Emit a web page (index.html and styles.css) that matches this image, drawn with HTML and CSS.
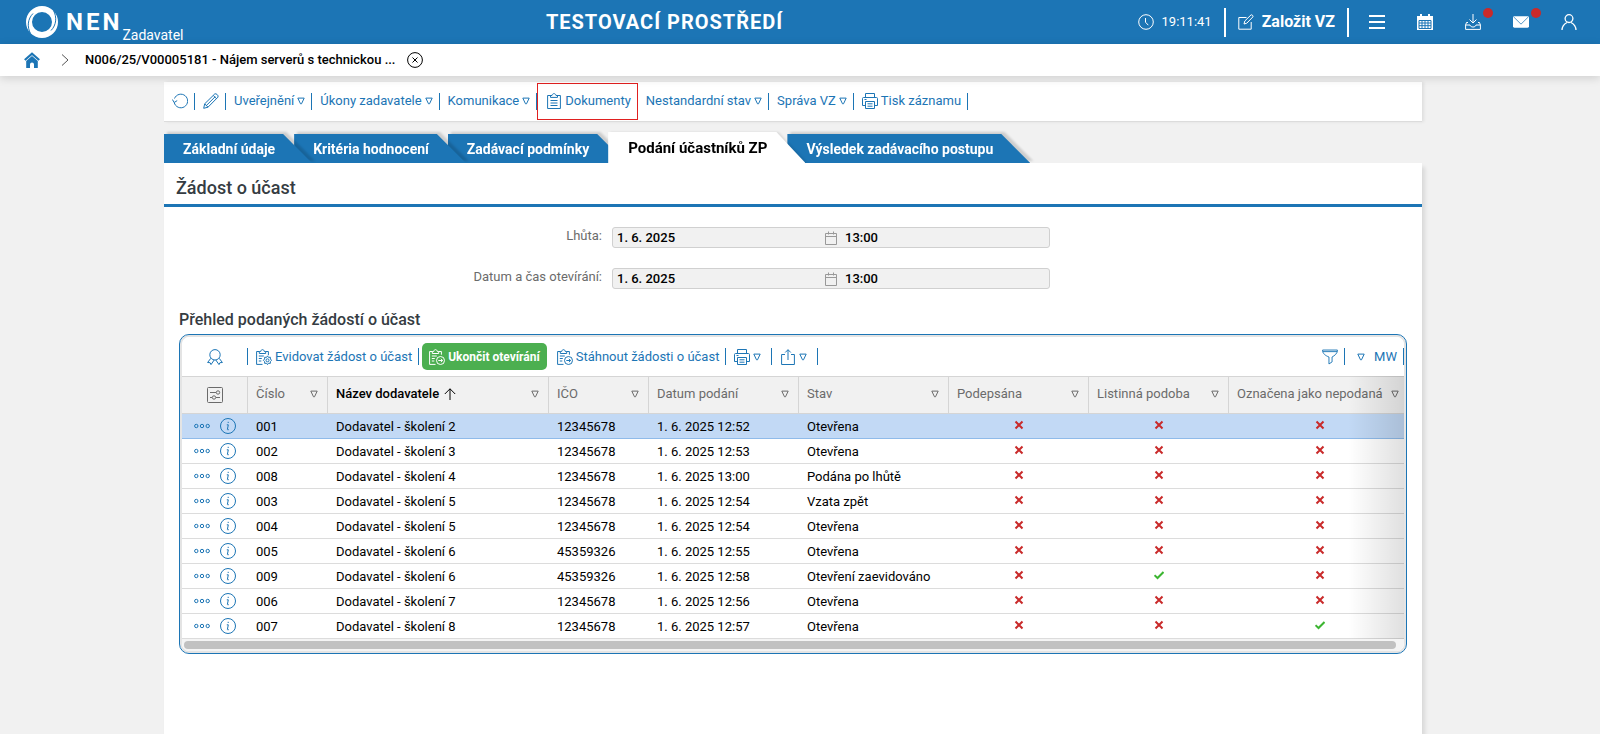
FILE: index.html
```html
<!DOCTYPE html>
<html lang="cs">

<head>
    <meta charset="utf-8">
    <title>NEN - Podání účastníků ZP</title>
    <link rel="stylesheet" href="styles.css">
</head>

<body>
    <!-- icon sprite -->
    <svg class="sprite" aria-hidden="true">
        <symbol id="i-clock" viewBox="0 0 16 16"><circle cx="8" cy="8" r="7.3"/><path d="M7.5 4v4.2l2.8 3"/></symbol>
        <symbol id="i-edit" viewBox="0 0 16 16"><path d="M8.5 3.5H.8v11.7h12.4V8"/><path d="M6 10l.8-3L13 .9c.8-.6 2.600 1 1.900 2L8.800 9.200z"/></symbol>
        <symbol id="i-menu" viewBox="0 0 16 16"><path stroke-width="2" d="M0 2h16M0 8h16M0 14h16"/></symbol>
        <symbol id="i-calendar" viewBox="0 0 16 16"><path class="solid" d="M0 2h3V0h2v2h6V0h2v2h3v14H0z"/><path stroke="#1c75b5" d="M2 6.500h12v8H2zM5 6.500v8M8 6.500v8M11 6.500v8M2 9h12M2 11.700h12"/></symbol>
        <symbol id="i-download" viewBox="0 0 16 16"><path d="M8 0v8.500M4.500 5.500L8 9l3.500-3.500M3 8.500H1.500L.6 11v4.400h14.800V11l-.9-2.500H13M.6 11H5c.5 2.700 5.500 2.700 6 0h4.400"/></symbol>
        <symbol id="i-mail" viewBox="0 0 17 16"><rect class="solid" y="2" width="17" height="12" rx="1.500"/><path stroke="#1c75b5" stroke-width=".8" d="M.8 2.700l7.700 7.600 7.700-7.600"/></symbol>
        <symbol id="i-user" viewBox="0 0 16 16"><g stroke-width="1.300"><circle cx="8" cy="4.600" r="3.900"/><path d="M1 16c.2-4.500 2.500-6.200 5-7.500M15 16c-.2-4.500-2.500-6.200-5-7.500"/></g></symbol>
        <symbol id="i-home" viewBox="0 0 16 16"><path stroke-width="2.200" d="M.8 8L8 1.600 15.200 8"/><path class="solid" d="M2.200 9L8 4l5.800 5v7H10v-3.500a2 2 0 0 0-4 0V16H2.200z"/></symbol>
        <symbol id="i-next" viewBox="0 0 8 12"><path d="M1 .5L7 6l-6 5.500"/></symbol>
        <symbol id="i-close" viewBox="0 0 16 16"><circle cx="8" cy="8" r="7.400"/><path d="M5.500 5.500l5 5M10.500 5.500l-5 5"/></symbol>
        <symbol id="i-refresh" viewBox="0 0 16 16"><path d="M2.200 9.500A6.800 6.800 0 1 0 2.500 5.500M.4 6.500l1.800 3 3-1.900"/></symbol>
        <symbol id="i-pencil" viewBox="0 0 16 16"><path d="M.7 15.300l1-4.500L11.800.9c1.200-.9 4.100 1.700 3.200 3.200L5 14.200zM1.700 10.800L5 14.200M3.200 12.700l9-9M10.300 2.400l3.300 3.400"/></symbol>
        <symbol id="i-drop" viewBox="0 0 8 8"><path d="M.8 1.100h6.400L4.500 6.800h-1z"/></symbol>
        <symbol id="i-doc" viewBox="0 0 14 16"><path d="M4 2.500H.6v13h12.800v-13H10M3.500 4.400h7V2.500H9C8.600 0 5.400 0 5 2.500H3.500zM3.500 7.500h7M3.500 10h7M3.500 12.500h7"/></symbol>
        <symbol id="i-print" viewBox="0 0 16 16"><path d="M3.500 4.500v-4h9v4M3.500 12.500h-3V5.500c0-.6.4-1 1-1h13c.6 0 1 .4 1 1v7h-3M3.500 8.500h9v7h-9zM5.500 10.800h5M5.500 13.200h5M2.500 6.500h2"/></symbol>
        <symbol id="i-badge" viewBox="0 0 16 16"><circle cx="8" cy="5.800" r="5.200"/><path d="M3.800 9.300L.6 13.500l2.500.2.900 1.900 3.200-4.600M12.200 9.300l3.200 4.200-2.500.2-.9 1.900L8.800 11"/></symbol>
        <symbol id="i-docset" viewBox="0 0 16 16"><path d="M6.500 15.400H.6V2.500h2.700M9.700 2.500h2.700v3.700M3.300 4.500h6.400v-2H8.300C8 0 5 0 4.700 2.500H3.300zM2.800 7h5M2.800 9.500h3M2.800 12h2.500"/><path d="M11.500 6.900l1 1.500 1.800-.2.100 1.800 1.200 1.300-1.200 1.300-.1 1.800-1.800-.2-1 1.400-1-1.400-1.800.2-.1-1.800-1.200-1.300L8.600 10l.1-1.800 1.800.2z"/><circle cx="11.500" cy="11.300" r="1.500"/></symbol>
        <symbol id="i-docgo" viewBox="0 0 16 16"><path d="M6.500 15.400H.6V2.500h2.700M9.700 2.500h2.700v3.200M3.300 4.500h6.400v-2H8.300C8 0 5 0 4.700 2.500H3.300zM2.800 7h5M2.800 9.500h3M2.800 12h2.500"/><circle cx="11.500" cy="11.500" r="4"/><path d="M9.300 11.500h4.200M11.900 9.800l1.700 1.700-1.700 1.700"/></symbol>
        <symbol id="i-share" viewBox="0 0 14 16"><path d="M4 5.500H.6v10h12.800v-10H10M7 11V.8M4.200 3.500L7 .7l2.800 2.800"/></symbol>
        <symbol id="i-filter" viewBox="0 0 17 16"><path d="M.6.6h15.800c0 4-3.200 6-5.700 7.400v5.200l-3.300 2.200V8C3.800 6.600.6 4.600.6.600zM.8 2.300h15.400"/></symbol>
        <symbol id="i-columns" viewBox="0 0 16 16"><rect x=".5" y=".5" width="15" height="15" rx="1"/><path d="M3 5.500h6M3 10.500h2M9 10.500h4"/><circle cx="11" cy="5.500" r="1.700"/><circle cx="7" cy="10.500" r="1.700"/></symbol>
        <symbol id="i-sort" viewBox="0 0 12 12"><path d="M6 12V.8M.8 6L6 .8 11.200 6"/></symbol>
        <symbol id="i-more" viewBox="0 0 16 6"><circle cx="2.300" cy="3" r="1.700"/><circle cx="8" cy="3" r="1.700"/><circle cx="13.700" cy="3" r="1.700"/></symbol>
        <symbol id="i-info" viewBox="0 0 16 16"><circle cx="8" cy="8" r="7.500"/><path d="M6.800 6.800h1.500l-.9 4.500c0 .7.800.6 1.500.2M8.200 3.800v1.200"/></symbol>
        <symbol id="i-date" viewBox="0 0 12 14"><path d="M.5 2.500h11v11H.5zM.5 5.500h11M3.500.5v3M8.500.5v3"/></symbol>
        <symbol id="i-no" viewBox="0 0 10 10"><path stroke-width="2" d="M1.500 1.500l7 7M8.500 1.500l-7 7"/></symbol>
        <symbol id="i-yes" viewBox="0 0 10 10"><path stroke-width="2" d="M.5 5.200l3 2.800 6-6"/></symbol>
    </svg>

    <header class="header">
        <a class="logo" href="#">
            <svg class="logo-mark" viewBox="0 0 32 32" aria-hidden="true">
                <circle cx="16" cy="16" r="13" stroke-width="6"/>
                <path class="slit" d="M27.500 4.500C31 11 30.500 19 25 24.500M4.500 27.500C1 21 1.500 13 7 7.500"/>
            </svg>
            <b>NEN</b>
            <span class="role">Zadavatel</span>
        </a>
        <h1 class="env">TESTOVACÍ PROSTŘEDÍ</h1>
        <nav class="header-nav">
            <span class="time"><svg class="icon"><use href="#i-clock"/></svg>19:11:41</span>
            <a class="create" href="#"><svg class="icon"><use href="#i-edit"/></svg>Založit VZ</a>
            <button class="nav-btn" aria-label="Menu"><svg class="icon"><use href="#i-menu"/></svg></button>
            <button class="nav-btn" aria-label="Kalendář"><svg class="icon"><use href="#i-calendar"/></svg></button>
            <button class="nav-btn dot" aria-label="Stažené soubory"><svg class="icon"><use href="#i-download"/></svg></button>
            <button class="nav-btn dot" aria-label="Zprávy"><svg class="icon"><use href="#i-mail"/></svg></button>
            <button class="nav-btn" aria-label="Uživatel"><svg class="icon"><use href="#i-user"/></svg></button>
        </nav>
    </header>

    <nav class="crumbs">
        <a class="home" href="#" aria-label="Domů"><svg class="icon"><use href="#i-home"/></svg></a>
        <svg class="next"><use href="#i-next"/></svg>
        <b>N006/25/V00005181 - Nájem serverů s technickou ...</b>
        <button class="close" aria-label="Zavřít"><svg class="icon"><use href="#i-close"/></svg></button>
    </nav>

    <main class="page">
        <div class="toolbar">
            <button class="tool" aria-label="Obnovit"><svg class="icon"><use href="#i-refresh"/></svg></button>
            <button class="tool" aria-label="Upravit"><svg class="icon"><use href="#i-pencil"/></svg></button>
            <button class="tool">Uveřejnění<svg class="drop"><use href="#i-drop"/></svg></button>
            <button class="tool">Úkony zadavatele<svg class="drop"><use href="#i-drop"/></svg></button>
            <button class="tool">Komunikace<svg class="drop"><use href="#i-drop"/></svg></button>
            <button class="tool marked"><svg class="icon"><use href="#i-doc"/></svg>Dokumenty</button>
            <button class="tool">Nestandardní stav<svg class="drop"><use href="#i-drop"/></svg></button>
            <button class="tool">Správa VZ<svg class="drop"><use href="#i-drop"/></svg></button>
            <button class="tool"><svg class="icon"><use href="#i-print"/></svg>Tisk záznamu</button>
        </div>

        <nav class="tabs">
            <div class="tab"><a href="#">Základní údaje</a></div>
            <div class="tab"><a href="#">Kritéria hodnocení</a></div>
            <div class="tab"><a href="#">Zadávací podmínky</a></div>
            <div class="tab active"><a href="#">Podání účastníků ZP</a></div>
            <div class="tab"><a href="#">Výsledek zadávacího postupu</a></div>
        </nav>

        <section class="content">
            <h2>Žádost o účast</h2>

            <div class="form">
                <label for="deadline">Lhůta:</label>
                <div class="field">
                    <input id="deadline" type="text" value="1. 6. 2025" readonly>
                    <svg class="date"><use href="#i-date"/></svg>
                    <input class="hour" type="text" value="13:00" aria-label="Lhůta - čas" readonly>
                </div>
                <label for="opening">Datum a čas otevírání:</label>
                <div class="field">
                    <input id="opening" type="text" value="1. 6. 2025" readonly>
                    <svg class="date"><use href="#i-date"/></svg>
                    <input class="hour" type="text" value="13:00" aria-label="Otevírání - čas" readonly>
                </div>
            </div>

            <h3>Přehled podaných žádostí o účast</h3>
            <div class="grid">
                <div class="grid-bar">
                    <button class="tool first" aria-label="Ocenění"><svg class="icon"><use href="#i-badge"/></svg></button>
                    <button class="tool"><svg class="icon"><use href="#i-docset"/></svg>Evidovat žádost o účast</button>
                    <button class="green"><svg class="icon"><use href="#i-docgo"/></svg>Ukončit otevírání</button>
                    <button class="tool"><svg class="icon"><use href="#i-docgo"/></svg>Stáhnout žádosti o účast</button>
                    <button class="tool pair" aria-label="Tisk"><svg class="icon"><use href="#i-print"/></svg><svg class="drop"><use href="#i-drop"/></svg></button>
                    <button class="tool pair" aria-label="Export"><svg class="icon"><use href="#i-share"/></svg><svg class="drop"><use href="#i-drop"/></svg></button>
                    <button class="tool filter" aria-label="Filtr"><svg class="icon"><use href="#i-filter"/></svg></button>
                    <button class="tool view"><svg class="drop"><use href="#i-drop"/></svg>MW</button>
                </div>
                <div class="grid-scroll">
                    <table>
                        <colgroup>
                            <col class="w-actions"><col class="w-no"><col class="w-name"><col class="w-ico"><col class="w-date">
                            <col class="w-date"><col class="w-flag"><col class="w-flag"><col class="w-last">
                        </colgroup>
                        <thead>
                            <tr>
                                <th class="cols"><svg class="icon"><use href="#i-columns"/></svg></th>
                                <th><div>Číslo<svg class="drop"><use href="#i-drop"/></svg></div></th>
                                <th class="sorted"><div>Název dodavatele<svg class="sort"><use href="#i-sort"/></svg><svg class="drop"><use href="#i-drop"/></svg></div></th>
                                <th><div>IČO<svg class="drop"><use href="#i-drop"/></svg></div></th>
                                <th><div>Datum podání<svg class="drop"><use href="#i-drop"/></svg></div></th>
                                <th><div>Stav<svg class="drop"><use href="#i-drop"/></svg></div></th>
                                <th><div>Podepsána<svg class="drop"><use href="#i-drop"/></svg></div></th>
                                <th><div>Listinná podoba<svg class="drop"><use href="#i-drop"/></svg></div></th>
                                <th><div>Označena jako nepodaná<svg class="drop"><use href="#i-drop"/></svg></div></th>
                            </tr>
                        </thead>
                        <tbody id="rows"></tbody>
                    </table>
                </div>
                <div class="scrollbar"><div class="thumb"></div></div>
            </div>
        </section>
    </main>

    <script>
        // číslo, dodavatel, IČO, datum, stav, podepsána, listinná, nepodaná
        var data = [
            ['001', 'Dodavatel - školení 2', '12345678', '1. 6. 2025 12:52', 'Otevřena', 0, 0, 0],
            ['002', 'Dodavatel - školení 3', '12345678', '1. 6. 2025 12:53', 'Otevřena', 0, 0, 0],
            ['008', 'Dodavatel - školení 4', '12345678', '1. 6. 2025 13:00', 'Podána po lhůtě', 0, 0, 0],
            ['003', 'Dodavatel - školení 5', '12345678', '1. 6. 2025 12:54', 'Vzata zpět', 0, 0, 0],
            ['004', 'Dodavatel - školení 5', '12345678', '1. 6. 2025 12:54', 'Otevřena', 0, 0, 0],
            ['005', 'Dodavatel - školení 6', '45359326', '1. 6. 2025 12:55', 'Otevřena', 0, 0, 0],
            ['009', 'Dodavatel - školení 6', '45359326', '1. 6. 2025 12:58', 'Otevření zaevidováno', 0, 1, 0],
            ['006', 'Dodavatel - školení 7', '12345678', '1. 6. 2025 12:56', 'Otevřena', 0, 0, 0],
            ['007', 'Dodavatel - školení 8', '12345678', '1. 6. 2025 12:57', 'Otevřena', 0, 0, 1]
        ];
        var html = '';
        for (var i = 0; i < data.length; i++) {
            html += i == 0 ? '<tr class="selected">' : '<tr>';
            html += '<td class="actions"><div><button aria-label="Akce"><svg class="more"><use href="#i-more"/></svg></button>' +
                '<button aria-label="Detail"><svg class="icon"><use href="#i-info"/></svg></button></div></td>';
            for (var j = 0; j < data[i].length; j++) {
                if (j < 5) {
                    html += '<td>' + data[i][j] + '</td>';
                } else {
                    var flag = data[i][j] ? 'yes' : 'no';
                    html += '<td class="flag"><svg class="' + flag + '"><use href="#i-' + flag + '"/></svg></td>';
                }
            }
            html += '</tr>';
        }
        document.getElementById('rows').innerHTML = html;
    </script>
</body>

</html>
```
FILE: styles.css
```css
* {
    box-sizing: border-box;
}

body {
    margin: 0;
    min-height: 100vh;
    display: flex;
    flex-direction: column;
    background: #f1f1f1;
    color: #000;
    font: 13px/16px Roboto, "Noto Sans", sans-serif;
}

h1,
h2,
h3 {
    margin: 0;
}

a {
    color: inherit;
    text-decoration: none;
}

button {
    padding: 0;
    border: 0;
    background: none;
    color: inherit;
    font: inherit;
    cursor: pointer;
}

svg {
    display: block;
    flex: none;
    fill: none;
    stroke: currentColor;
}

.solid {
    fill: currentColor;
    stroke: none;
}

.sprite {
    position: absolute;
    width: 0;
    height: 0;
}

.icon {
    width: 16px;
    height: 16px;
}

.drop {
    width: 8px;
    height: 8px;
}

/* header */
.header {
    display: flex;
    align-items: center;
    justify-content: space-between;
    height: 44px;
    padding: 0 7px 0 26px;
    background: #1c75b5;
    color: #fff;
}

.logo {
    display: flex;
    align-items: center;
    height: 44px;
}

.logo b {
    margin-left: 8px;
    font-size: 24px;
    letter-spacing: 3px;
}

.logo-mark {
    width: 32px;
    height: 32px;
}

.slit {
    stroke: #1c75b5;
    stroke-width: 1;
}

.role {
    align-self: flex-end;
    padding-bottom: 1px;
    font-size: 14px;
}

.env {
    padding-left: 8px;
    font-size: 20px;
    letter-spacing: 1px;
}

.header-nav {
    display: flex;
    align-items: center;
}

.time,
.create {
    display: flex;
    align-items: center;
    gap: 8px;
    height: 29px;
    padding-right: 12px;
    border-right: 2px solid #fff;
}

.create {
    margin-right: 4px;
    padding-left: 12px;
    font-size: 16px;
    font-weight: 700;
}

.nav-btn {
    position: relative;
    display: flex;
    justify-content: center;
    width: 48px;
}

.dot::after {
    content: "";
    position: absolute;
    top: -6px;
    right: 4px;
    width: 10px;
    height: 10px;
    border-radius: 50%;
    background: #c92a2a;
}

/* breadcrumbs */
.crumbs {
    position: relative;
    display: flex;
    align-items: center;
    height: 32px;
    padding-left: 24px;
    background: #fff;
    box-shadow: 0 2px 10px rgba(0, 0, 0, .15);
}

.crumbs b {
    font-weight: 500;
}

.home {
    color: #1c75b5;
}

.next {
    width: 8px;
    height: 12px;
    margin: 0 16px 0 21px;
    color: #555;
}

.close {
    margin-left: 12px;
}

/* page */
.page {
    flex: 1;
    display: flex;
    flex-direction: column;
    margin: 6px 178px 0 164px;
}

.toolbar {
    display: flex;
    height: 40px;
    align-items: center;
    padding-bottom: 1px;
    background: #fff;
    border-bottom: 1px solid #dcdcdc;
    box-shadow: 2px 0 3px rgba(0, 0, 0, .08);
}

.tool {
    display: flex;
    align-items: center;
    gap: 3px;
    height: 17px;
    padding: 0 6px 0 8px;
    border-right: 1px solid #1c75b5;
    color: #1c75b5;
    white-space: nowrap;
}

.marked {
    height: 37px;
    border: 1px solid #e02020;
}

.tabs {
    display: flex;
    align-items: flex-end;
    height: 41px;
}

.tab {
    position: relative;
    margin-left: -18px;
    filter: drop-shadow(3px -2px 1px rgba(0, 0, 0, .15));
}

.tab:nth-child(1) {
    z-index: 4;
    margin-left: 0;
}

.tab:nth-child(2) {
    z-index: 3;
}

.tab:nth-child(3) {
    z-index: 2;
}

.tab a {
    display: block;
    height: 29px;
    padding: 0 37px 0 19px;
    background: #1c75b5;
    clip-path: polygon(0 0, calc(100% - 29px) 0, 100% 100%, 0 100%);
    color: #fff;
    font-size: 14px;
    font-weight: 700;
    line-height: 30px;
    white-space: nowrap;
}

.tab.active {
    z-index: 5;
    filter: drop-shadow(2px 0 1px rgba(0, 0, 0, .1));
}

.tab.active a {
    height: 31px;
    padding: 0 38px 0 20px;
    background: #fff;
    color: #000;
    font-size: 15px;
    line-height: 32px;
}

.content {
    position: relative;
    z-index: 6;
    flex: 1;
    background: #fff;
    box-shadow: 3px 4px 4px rgba(0, 0, 0, .1);
}

.content h2 {
    height: 44px;
    padding-left: 12px;
    border-bottom: 3px solid #1c75b5;
    color: #353c42;
    font-size: 18px;
    font-weight: 500;
    line-height: 50px;
}

.form {
    display: grid;
    grid-template-columns: 438px 438px;
    gap: 20px 10px;
    padding: 20px 0 0;
}

.form label {
    color: #6b6b6b;
    line-height: 18px;
    text-align: right;
}

.field {
    display: flex;
    align-items: center;
    height: 21px;
    padding-left: 4px;
    border: 1px solid #d0d0d0;
    border-radius: 3px;
    background: #f1f1f1;
}

.field input {
    flex: none;
    width: 208px;
    padding: 0;
    border: 0;
    outline: 0;
    background: none;
    font: 500 13px/16px Roboto, "Noto Sans", sans-serif;
}

.field .hour {
    flex: 1;
    min-width: 0;
}

.field .date {
    width: 12px;
    height: 14px;
    margin-right: 8px;
    color: #999;
}

.content h3 {
    padding: 23px 15px 6px;
    color: #353c42;
    font-size: 16px;
    font-weight: 500;
    line-height: 16px;
}

/* grid */
.grid {
    margin: 0 15px;
    padding: 2px;
    border: 1px solid #1c75b5;
    border-radius: 10px;
    box-shadow: inset 0 0 0 2px #e4e4e4;
    overflow: hidden;
}

.grid-bar {
    display: flex;
    align-items: center;
    height: 39px;
    border-radius: 8px 8px 0 0;
    background: #fff;
}

.first {
    justify-content: center;
    width: 66px;
    padding: 0;
}

.pair {
    padding-right: 10px;
}

.green {
    display: flex;
    align-items: center;
    gap: 3px;
    height: 27px;
    margin: 0 2px 0 3px;
    padding: 0 7px;
    border-radius: 5px;
    background: #4caf50;
    color: #fff;
    font-size: 12px;
    font-weight: 700;
}

.filter {
    margin-left: auto;
}

.view {
    gap: 9px;
    padding-left: 12px;
}

.grid-scroll {
    position: relative;
    overflow: hidden;
}

.grid-scroll::after {
    content: "";
    position: absolute;
    top: 0;
    right: 0;
    bottom: 0;
    width: 56px;
    background: linear-gradient(to right, rgba(0, 0, 0, 0), rgba(0, 0, 0, .12));
}

table {
    width: 1229px;
    min-width: 100%;
    table-layout: fixed;
    border-collapse: separate;
    border-spacing: 0;
}

.w-actions {
    width: 66px;
}

.w-no {
    width: 80px;
}

.w-name {
    width: 221px;
}

.w-ico {
    width: 100px;
}

.w-date {
    width: 150px;
}

.w-flag {
    width: 140px;
}

.w-last {
    width: 182px;
}

th {
    height: 38px;
    padding: 0 9px 3px 8px;
    border: solid #d5d5d5;
    border-width: 1px 1px 1px 0;
    background: #f1f1f1;
    color: #6b6b6b;
    font-weight: 400;
    text-align: left;
    white-space: nowrap;
}

th div {
    display: flex;
    align-items: center;
}

th .drop {
    margin-left: auto;
}

th:last-child .drop {
    margin-left: 8px;
}

.cols {
    padding: 0;
}

.cols .icon {
    margin: 0 auto;
}

.sorted {
    color: #000;
    font-weight: 500;
}

.sorted .drop {
    color: #6b6b6b;
}

.sort {
    width: 12px;
    height: 12px;
    margin-left: 5px;
}

td {
    height: 25px;
    padding: 2px 8px 0;
    border-bottom: 1px solid #dcdcdc;
    background: #fff;
    white-space: nowrap;
}

.selected td {
    border-color: #8fbbea;
    background: #c2d9f5;
}

.actions {
    padding: 0 11px 0 12px;
    color: #1c75b5;
}

.actions div {
    display: flex;
    align-items: center;
    gap: 10px;
}

.more {
    width: 16px;
    height: 6px;
}

.flag {
    padding: 0 0 2px;
}

.flag svg {
    width: 10px;
    height: 10px;
    margin: 0 auto;
}

.no {
    color: #c92a2a;
}

.yes {
    color: #3cb531;
}

.scrollbar {
    padding: 2px 8px 2px 2px;
    border-radius: 0 0 8px 8px;
    background: #f4f4f4;
}

.thumb {
    height: 8px;
    border-radius: 4px;
    background: #c1c1c1;
}
```
